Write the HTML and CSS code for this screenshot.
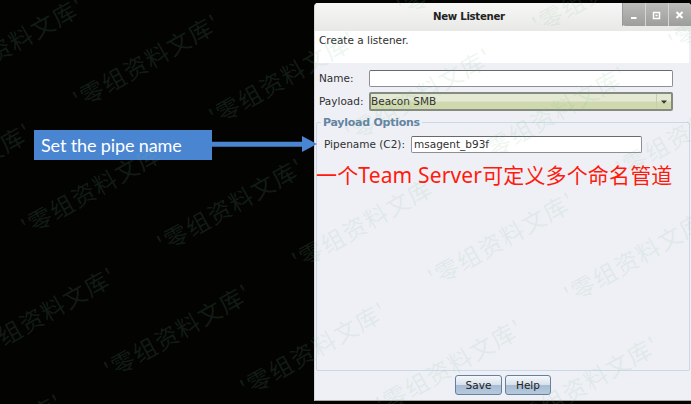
FILE: index.html
```html
<!DOCTYPE html>
<html lang="en">
<head>
<meta charset="utf-8">
<title>New Listener</title>
<link rel="stylesheet" href="styles.css">
</head>
<body>
<main class="stage">
  <aside class="callout">
    <div class="callout-label"><span>Set the pipe name</span></div>
    <svg class="arrow" width="105" height="18" viewBox="0 0 105 18"><path d="M0 6.7H90V1L105 9L90 17V11.7H0Z" fill="#4a85d2"/></svg>
  </aside>
  <section class="dialog">
    <header class="titlebar">
      <h1><span>New Listener</span></h1>
      <div class="controls">
        <button aria-label="Minimize"><svg width="23" height="23"><path d="M9 15H14.500" stroke="#fff" stroke-width="2"/></svg></button>
        <button aria-label="Maximize"><svg width="23" height="23"><path d="M8.500 9.500H14.500V15.500H8.500Z M10.500 12.500H12.500" fill="none" stroke="#fff" stroke-width="1.500"/></svg></button>
        <button aria-label="Close"><svg width="23" height="23"><path d="M8.500 9L14.500 15M14.500 9L8.500 15" stroke="#fff" stroke-width="2"/></svg></button>
      </div>
    </header>
    <p class="intro"><span>Create a listener.</span></p>
    <div class="row name-row"><label>Name:</label><div class="field"></div></div>
    <div class="row payload-row"><label>Payload:</label>
      <div class="select"><span>Beacon SMB</span><i><svg width="6" height="4"><path d="M0 0.500H6L3 3.800Z" fill="#333"/></svg></i></div>
    </div>
    <fieldset class="options">
      <legend><span>Payload Options</span></legend>
      <div class="pipe"><label>Pipename (C2):</label><div class="field"><span>msagent_b93f</span></div></div>
      <p class="note">一个<span>Team Server</span>可定义多个命名管道</p>
    </fieldset>
    <footer><button class="btn save">Save</button><button class="btn help">Help</button></footer>
  </section>
</main>
<svg class="watermark" width="691" height="404" viewBox="0 0 691 404">
  <g transform="translate(5.500 12.500)">
  <text transform="translate(398 5) rotate(-29.500)">'零组资料文库'</text>
  <text transform="translate(533 22) rotate(-29.500)">'零组资料文库'</text>
  <text transform="translate(669 39) rotate(-29.500)">'零组资料文库'</text>
  <text transform="translate(-62 80) rotate(-29.500)">'零组资料文库'</text>
  <text transform="translate(74 97) rotate(-29.500)">'零组资料文库'</text>
  <text transform="translate(210 114) rotate(-29.500)">'零组资料文库'</text>
  <text transform="translate(346 131) rotate(-29.500)">'零组资料文库'</text>
  <text transform="translate(481 149) rotate(-29.500)">'零组资料文库'</text>
  <text transform="translate(617 166) rotate(-29.500)">'零组资料文库'</text>
  <text transform="translate(-114 206) rotate(-29.500)">'零组资料文库'</text>
  <text transform="translate(22 224) rotate(-29.500)">'零组资料文库'</text>
  <text transform="translate(158 241) rotate(-29.500)">'零组资料文库'</text>
  <text transform="translate(293 258) rotate(-29.500)">'零组资料文库'</text>
  <text transform="translate(429 275) rotate(-29.500)">'零组资料文库'</text>
  <text transform="translate(565 292) rotate(-29.500)">'零组资料文库'</text>
  <text transform="translate(-30 350) rotate(-29.500)">'零组资料文库'</text>
  <text transform="translate(105 367) rotate(-29.500)">'零组资料文库'</text>
  <text transform="translate(241 385) rotate(-29.500)">'零组资料文库'</text>
  <text transform="translate(377 402) rotate(-29.500)">'零组资料文库'</text>
  <text transform="translate(513 419) rotate(-29.500)">'零组资料文库'</text>
  <text transform="translate(-83 477) rotate(-29.500)">'零组资料文库'</text>
  </g>
</svg>
</body>
</html>
```
FILE: styles.css
```css
* { box-sizing: border-box; }
body {
  margin: 0;
  background: #030302;
  color: #303030;
  font: 10.5px/14px "DejaVu Sans", sans-serif;
  overflow: hidden;
}
h1, p { margin: 0; }
.stage {
  display: grid;
  grid-template-columns: 314px 377px;
  width: 691px;
  height: 404px;
  padding-top: 3px;
}
.callout {
  display: flex;
  align-items: flex-start;
  padding: 127px 0 0 34px;
  z-index: 1;
}
.callout-label {
  flex: none;
  width: 178px;
  height: 30px;
  padding-left: 7px;
  background: #4a85d2;
  color: #fff;
  font: 18px/31px Lato, sans-serif;
  letter-spacing: -.12px;
  white-space: nowrap;
}
.arrow { flex: none; margin-top: 5px; }
.dialog {
  display: flex;
  flex-direction: column;
  height: 398px;
  background: #eff0f6;
  border-left: 1px solid #d8d8d8;
  border-bottom: 1px solid #aaa;
  border-radius: 4px 4px 0 0;
  overflow: hidden;
}
.titlebar {
  display: flex;
  height: 28px;
  flex: none;
  background: linear-gradient(#f6f6f6, #e8e8e6);
}
.titlebar h1 {
  width: 308px;
  padding-left: 118px;
  font: bold 10.2px/27px "DejaVu Sans", sans-serif;
  letter-spacing: -.3px;
  color: #222;
}
.controls {
  display: flex;
  width: 69px;
  height: 23px;
  background: linear-gradient(#bcbcba, #9d9d9b);
  border-bottom-left-radius: 4px;
}
.controls button {
  width: 23px;
  padding: 0;
  border: 0;
  border-left: 1px solid #d5d5d3;
  background: none;
}
.controls button:first-child { border-color: #999; }
.controls svg { display: block; margin-left: -1px; }
.intro {
  flex: none;
  height: 32px;
  margin-right: 2px;
  padding: 2px 4px;
  background: #fff;
}
.row { display: flex; flex: none; padding-left: 4px; }
.row label { width: 50px; }
.name-row { margin-top: 7px; height: 17px; line-height: 17px; }
.payload-row { margin-top: 5px; height: 19px; line-height: 19px; }
.field {
  width: 304px;
  height: 17px;
  border: 1px solid #8c8f94;
  border-top-color: #66696e;
  border-radius: 2px;
  background: #fff;
}
.select {
  display: flex;
  justify-content: space-between;
  width: 304px;
  height: 19px;
  border: 2px solid #858b80;
  border-radius: 2px;
  background: linear-gradient(#e3e9d2 48%, #d0d9ae 52%);
  line-height: 15px;
}
.select i {
  display: flex;
  align-items: center;
  justify-content: center;
  width: 15px;
  border-left: 1px solid #c8cfb0;
}
.options {
  min-width: 0;
  width: 374px;
  height: 257px;
  flex: none;
  margin: 3px 0 0 1px;
  padding: 0;
  border: 1px solid #c9dae6;
  border-radius: 2px;
}
.options legend {
  height: 16px;
  margin-left: 4px;
  padding: 0 2px;
  color: #6384a1;
  font: bold 11px/17px "DejaVu Sans", sans-serif;
  letter-spacing: -.25px;
}
.pipe { display: flex; padding: 6px 0 0 7px; line-height: 17px; }
.pipe label { width: 87px; }
.pipe .field { width: 231px; padding-left: 2px; line-height: 15px; }
.note {
  margin: 8px 0 0 -1px;
  color: #ff1a0d;
  font: 21px/28px "Noto Sans", "Noto Sans CJK SC", sans-serif;
  letter-spacing: .15px;
  white-space: nowrap;
}
footer { display: flex; gap: 3px; padding: 4px 0 0 140px; }
.btn {
  width: 47px;
  height: 20px;
  padding: 0;
  border: 1px solid #66809b;
  border-radius: 3px;
  background: linear-gradient(#f5f8fb, #d8e1eb 48%, #a6bcd3 52%, #b6cade);
  color: #222;
  font: 10.5px/17px "DejaVu Sans", sans-serif;
}
.help { width: 46px; }
.watermark {
  position: absolute;
  top: 0;
  left: 0;
  z-index: 2;
  pointer-events: none;
}
.watermark text {
  fill: rgba(120, 190, 140, .15);
  font: 23.5px "Noto Sans CJK SC", sans-serif;
  letter-spacing: 1.3px;
}
```
